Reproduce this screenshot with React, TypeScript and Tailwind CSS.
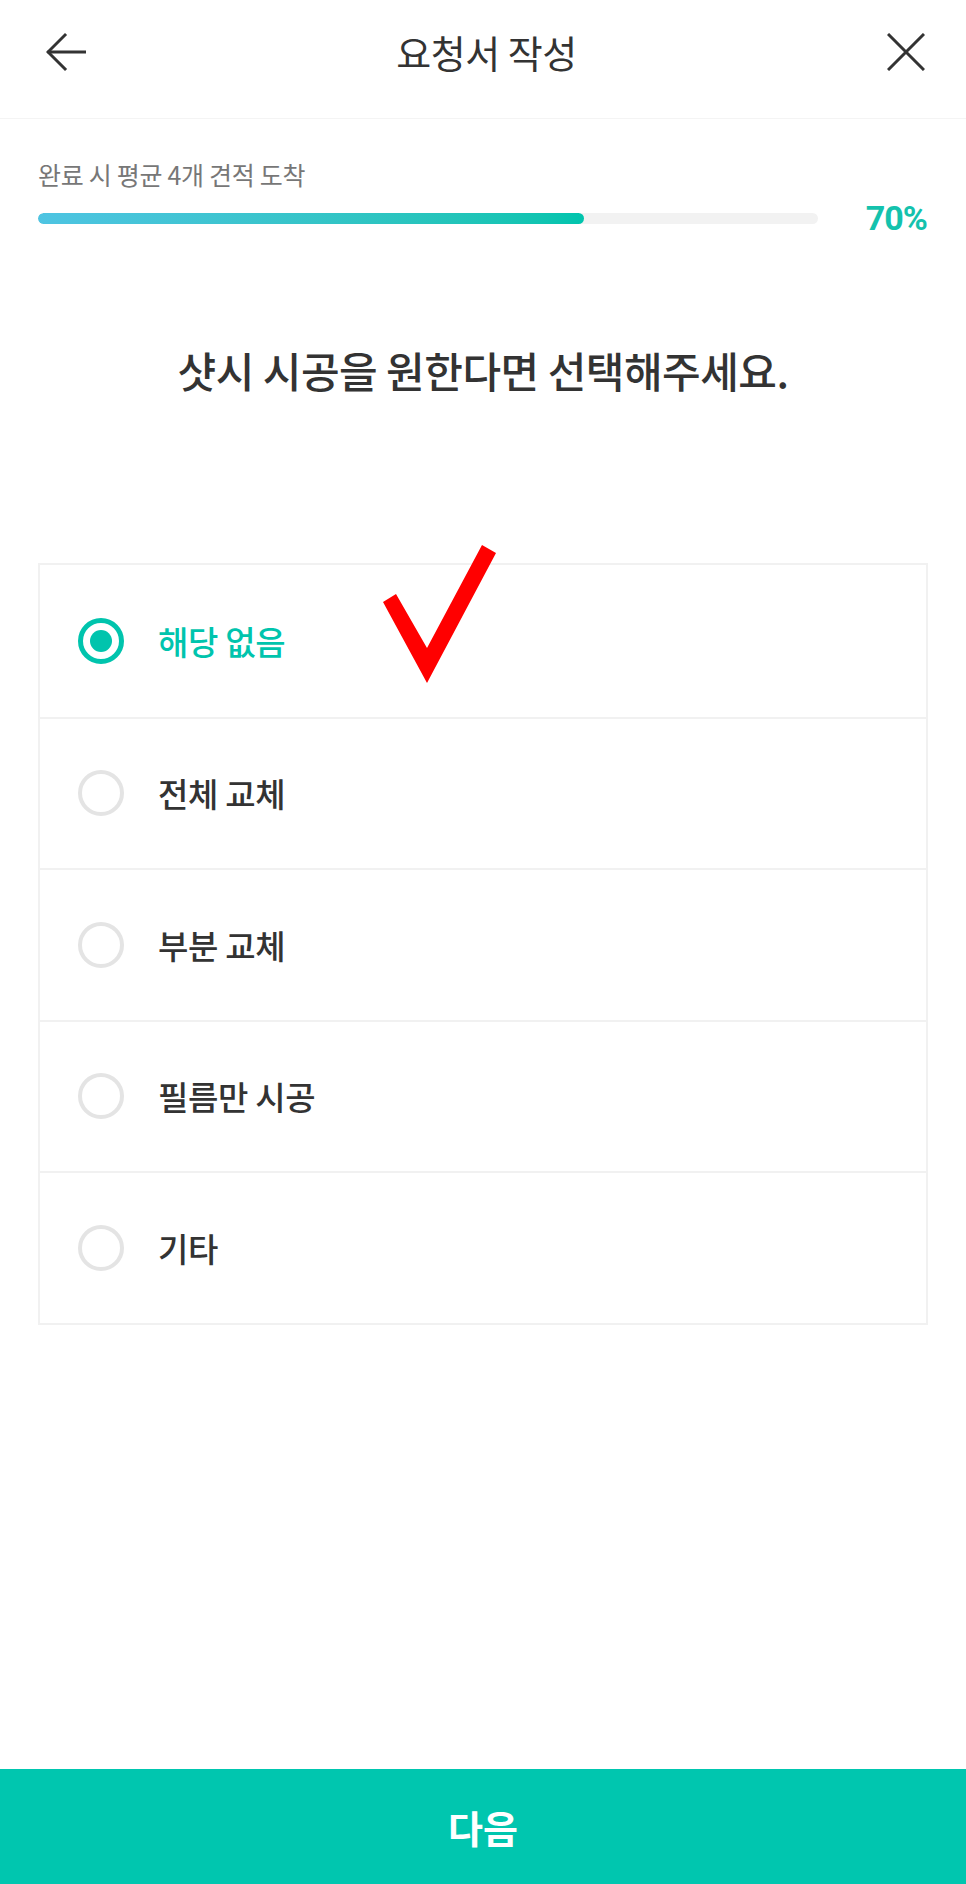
import React, { useState } from "react";

const options = ["해당 없음", "전체 교체", "부분 교체", "필름만 시공", "기타"];

const font = { fontFamily: '"Noto Sans CJK KR", "Noto Sans", sans-serif' };

const App: React.FC = () => {
    const [selected, setSelected] = useState(0);
    const progress = 70;

    return (
        <div className="relative flex h-[1884px] w-full flex-col bg-white" style={font}>
            {/* Header */}
            <div className="flex h-[119px] items-center justify-between border-b border-[#f4f4f4] pb-[14px] pl-[46px] pr-[41px]">
                <button className="h-[40px] w-[40px]">
                    <svg viewBox="0 0 40 40" width="40" height="40" fill="none" stroke="#333" strokeWidth="3" strokeLinecap="square">
                        <path d="M19 3 L2 20 L19 37" />
                        <path d="M3 20 L39 20" />
                    </svg>
                </button>
                <h1 className="text-[38px] leading-[48px] tracking-[-0.5px] text-[#333]">요청서 작성</h1>
                <button className="h-[38px] w-[38px]">
                    <svg viewBox="0 0 38 38" width="38" height="38" fill="none" stroke="#333" strokeWidth="3">
                        <path d="M1 1 L37 37 M37 1 L1 37" />
                    </svg>
                </button>
            </div>

            {/* Progress */}
            <div className="pl-[38px] pr-[39px] pt-[38px]">
                <p className="text-[25px] leading-[34px] tracking-[-0.3px] text-[#777]">완료 시 평균 4개 견적 도착</p>
                <div className="mt-[10px] flex h-[34px] items-center justify-between">
                    <div className="h-[11px] w-[780px] overflow-hidden rounded-full bg-[#f2f2f2]">
                        <div
                            className="h-full rounded-full bg-gradient-to-r from-[#4ec4e2] to-[#00c4ad]"
                            style={{ width: `${progress}%` }}
                        />
                    </div>
                    <span className="text-[34px] font-bold leading-[34px] tracking-[-1px] text-[#14c2ad]" style={{ fontFamily: "Roboto, sans-serif" }}>
                        {progress}%
                    </span>
                </div>
            </div>

            {/* Question */}
            <h2 className="mt-[110px] text-center text-[42px] font-medium leading-[50px] tracking-[-0.5px] text-[#333]">
                샷시 시공을 원한다면 선택해주세요.
            </h2>

            {/* Options */}
            <div className="mx-[38px] mt-[168px] border-2 border-[#f1f1f1]">
                {options.map((label, i) => {
                    const active = i === selected;
                    return (
                        <div
                            key={label}
                            onClick={() => setSelected(i)}
                            className={`flex h-[151.5px] cursor-pointer items-center pl-[38px] ${i > 0 ? "border-t-2 border-[#f1f1f1]" : ""}`}
                        >
                            {active ? (
                                <span className="flex h-[46px] w-[46px] items-center justify-center rounded-full border-[5px] border-[#00c4ad]">
                                    <span className="h-[22px] w-[22px] rounded-full bg-[#00c4ad]" />
                                </span>
                            ) : (
                                <span className="h-[46px] w-[46px] rounded-full border-[4px] border-[#e4e4e4]" />
                            )}
                            <span
                                className={`ml-[34px] text-[33px] font-medium leading-[44px] tracking-[-0.3px] ${active ? "text-[#00c4ad]" : "text-[#333]"}`}
                            >
                                {label}
                            </span>
                        </div>
                    );
                })}
            </div>

            <div className="flex-1" />

            {/* Next button */}
            <button className="h-[115px] w-full bg-[#00c6af] text-[38px] font-semibold text-white">다음</button>

            {/* Red check annotation */}
            <svg className="pointer-events-none absolute left-0 top-0" width="966" height="1884" viewBox="0 0 966 1884">
                <polygon points="383,602 396,594 427,648 482,545 496,553 427,683" fill="#ff0000" />
            </svg>
        </div>
    );
};

export default App;
